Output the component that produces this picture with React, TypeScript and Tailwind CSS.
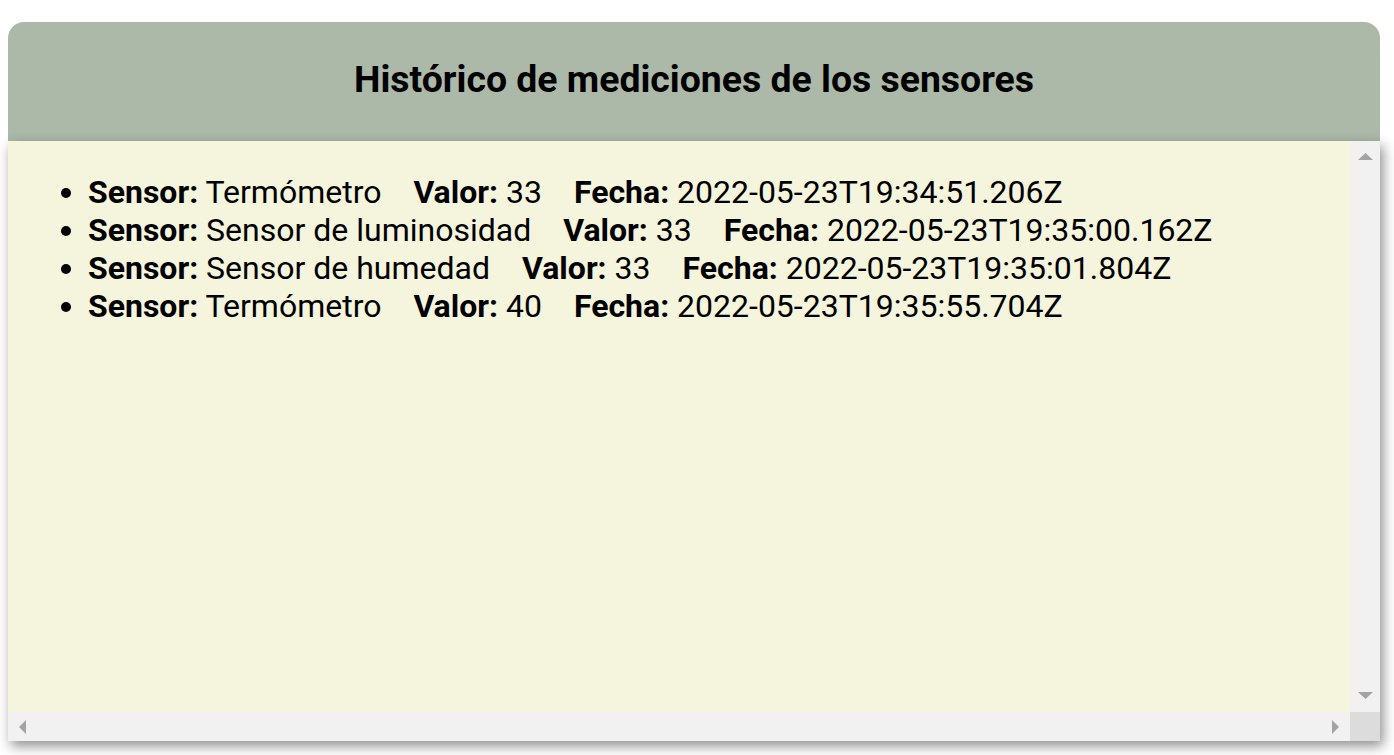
import React from "react";

const rows = [
  { sensor: "Termómetro", valor: "33", fecha: "2022-05-23T19:34:51.206Z" },
  { sensor: "Sensor de luminosidad", valor: "33", fecha: "2022-05-23T19:35:00.162Z" },
  { sensor: "Sensor de humedad", valor: "33", fecha: "2022-05-23T19:35:01.804Z" },
  { sensor: "Termómetro", valor: "40", fecha: "2022-05-23T19:35:55.704Z" },
];

export default function App() {
  return (
    <div
      className="w-[1394px] h-[755px] bg-white pt-[22px] px-[8px] overflow-hidden"
      style={{ fontFamily: "Roboto, 'Noto Sans', sans-serif" }}
    >
      <div className="w-[1372px] flex flex-col">
        <div className="h-[119px] rounded-t-[16px] bg-[#acb9a8] flex items-center justify-center pb-[3px]">
          <h1 className="text-[37.4px] font-bold text-black leading-none">
            Histórico de mediciones de los sensores
          </h1>
        </div>
        <div className="relative h-[600px] flex flex-col shadow-[3px_5px_12px_rgba(0,0,0,0.45)]">
          <div className="flex-1 flex min-h-0">
            <div className="flex-1 bg-[#f4f5dc] overflow-hidden">
              <ul className="list-disc pl-[80px] mt-[32px] text-[32px] leading-[38px] text-black">
                {rows.map((r, i) => (
                  <li key={i} className="whitespace-nowrap">
                    <b>Sensor:</b> {r.sensor}
                    <span className="ml-[32px]">
                      <b>Valor:</b> {r.valor}
                    </span>
                    <span className="ml-[32px]">
                      <b>Fecha:</b> {r.fecha}
                    </span>
                  </li>
                ))}
              </ul>
            </div>
            <div className="w-[30px] bg-[#f1f1f1] flex flex-col items-center justify-between pt-[12px] pb-[13px]">
              <svg width="15" height="7" viewBox="0 0 15 7">
                <polygon points="7.5,0 15,7 0,7" fill="#a3a3a3" />
              </svg>
              <svg width="15" height="7" viewBox="0 0 15 7">
                <polygon points="0,0 15,0 7.5,7" fill="#a3a3a3" />
              </svg>
            </div>
          </div>
          <div className="h-[29px] flex">
            <div className="flex-1 bg-[#f1f1f1] flex items-center justify-between px-[11px]">
              <svg width="7" height="14" viewBox="0 0 7 14">
                <polygon points="7,0 7,14 0,7" fill="#a3a3a3" />
              </svg>
              <svg width="7" height="14" viewBox="0 0 7 14">
                <polygon points="0,0 7,7 0,14" fill="#a3a3a3" />
              </svg>
            </div>
            <div className="w-[30px] bg-[#dcdcdc]" />
          </div>
        </div>
      </div>
    </div>
  );
}
